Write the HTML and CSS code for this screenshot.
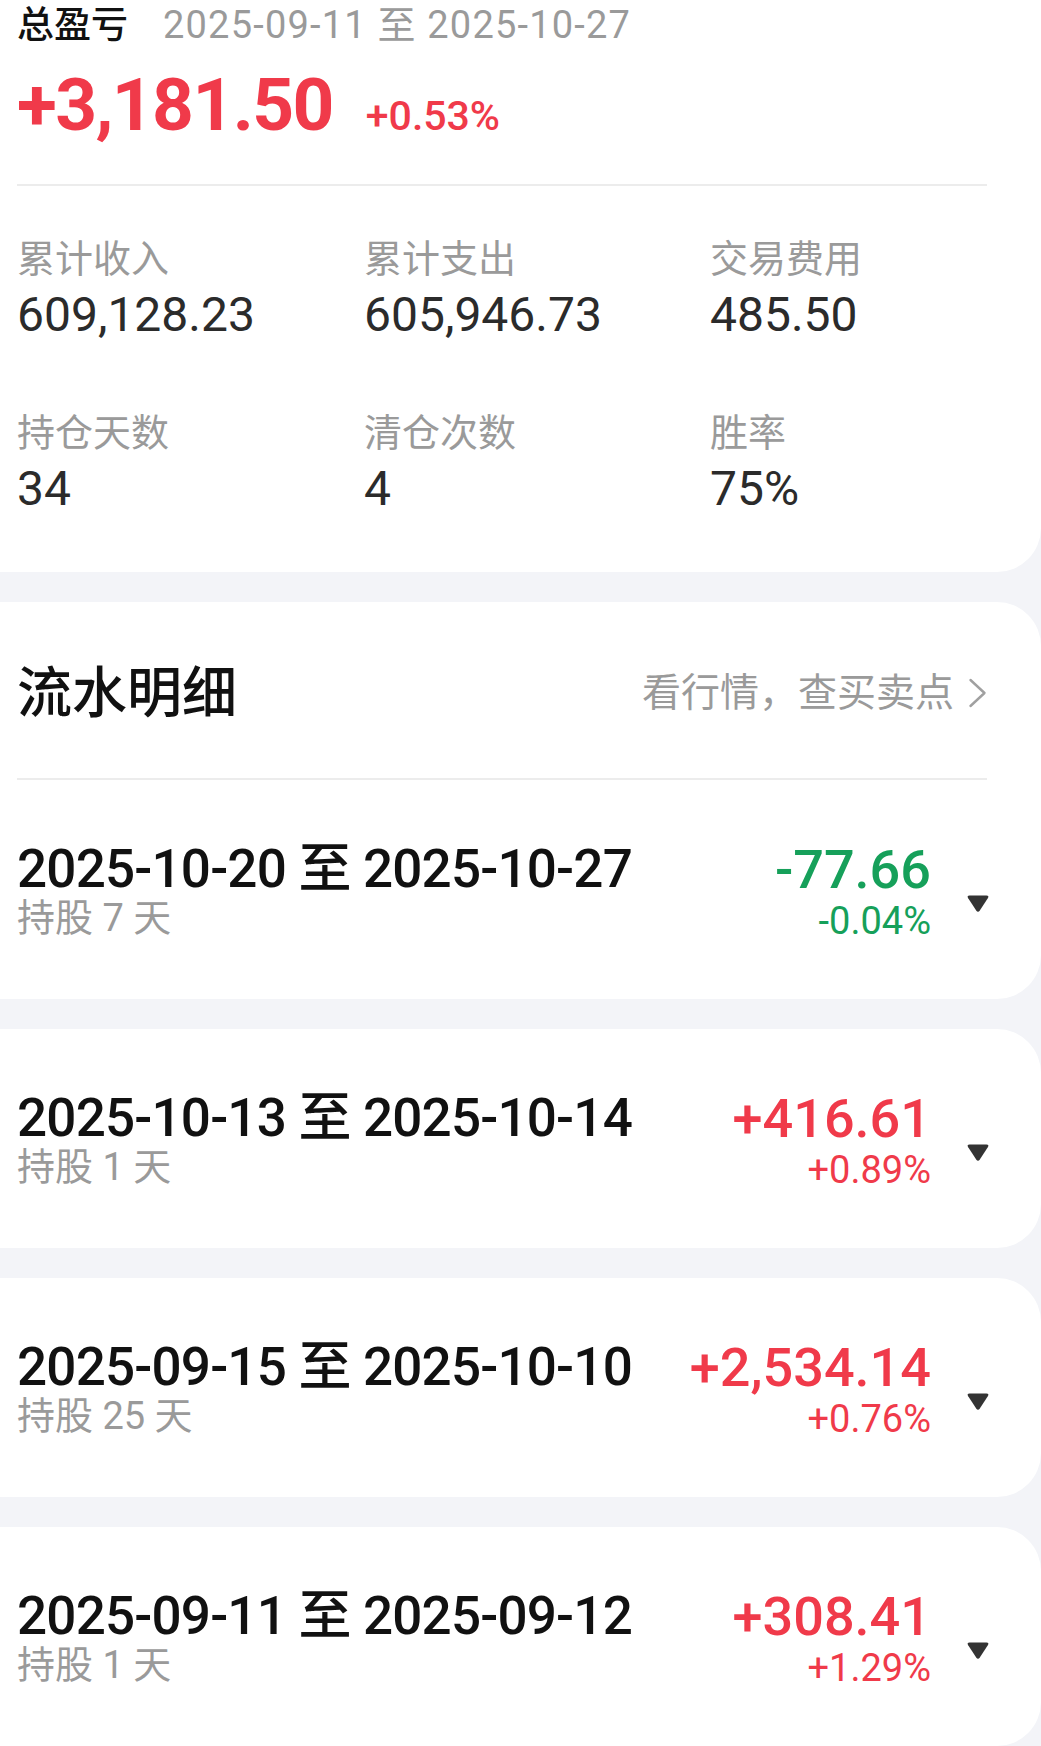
FILE: index.html
```html
<!DOCTYPE html>
<html lang="zh-CN">
<head>
<meta charset="utf-8">
<title>总盈亏</title>
<link rel="stylesheet" href="styles.css">
</head>
<body>
<section class="card summary">
  <div class="title-row">
    <span class="title">总盈亏</span>
    <span class="range">2025-09-11 至 2025-10-27</span>
  </div>
  <div class="total-row">
    <span class="total">+3,181.50</span>
    <span class="total-pct">+0.53%</span>
  </div>
  <div class="divider"></div>
  <div class="stats">
    <div class="stat"><div class="label">累计收入</div><div class="value">609,128.23</div></div>
    <div class="stat"><div class="label">累计支出</div><div class="value">605,946.73</div></div>
    <div class="stat"><div class="label">交易费用</div><div class="value">485.50</div></div>
    <div class="stat"><div class="label">持仓天数</div><div class="value">34</div></div>
    <div class="stat"><div class="label">清仓次数</div><div class="value">4</div></div>
    <div class="stat"><div class="label">胜率</div><div class="value">75%</div></div>
  </div>
</section>

<section class="card">
  <div class="list-head">
    <span class="list-title">流水明细</span>
    <span class="link">看行情，查买卖点
      <svg class="chev" width="19" height="30" viewBox="0 0 19 30"><path d="M2.5 2 L16.5 15 L2.5 28" fill="none" stroke="#a0a0a0" stroke-width="2.4" stroke-linecap="round" stroke-linejoin="round"/></svg>
    </span>
  </div>
  <div class="divider list-divider"></div>
  <div class="row">
    <div class="left">
      <div class="date">2025-10-20 至 2025-10-27</div>
      <div class="hold">持股 7 天</div>
    </div>
    <div class="amt down">
      <div class="num">-77.66</div>
      <div class="pct">-0.04%</div>
    </div>
    <svg class="caret" width="24" height="19" viewBox="0 0 24 19"><path d="M3.5 1.5 H20.5 Q23.5 1.5 21.8 4.2 L13.8 16.6 Q12 19 10.2 16.6 L2.2 4.2 Q0.5 1.5 3.5 1.5 Z" fill="#333"/></svg>
  </div>
</section>

<section class="card">
  <div class="row">
    <div class="left">
      <div class="date">2025-10-13 至 2025-10-14</div>
      <div class="hold">持股 1 天</div>
    </div>
    <div class="amt up">
      <div class="num">+416.61</div>
      <div class="pct">+0.89%</div>
    </div>
    <svg class="caret" width="24" height="19" viewBox="0 0 24 19"><path d="M3.5 1.5 H20.5 Q23.5 1.5 21.8 4.2 L13.8 16.6 Q12 19 10.2 16.6 L2.2 4.2 Q0.5 1.5 3.5 1.5 Z" fill="#333"/></svg>
  </div>
</section>

<section class="card">
  <div class="row">
    <div class="left">
      <div class="date">2025-09-15 至 2025-10-10</div>
      <div class="hold">持股 25 天</div>
    </div>
    <div class="amt up">
      <div class="num">+2,534.14</div>
      <div class="pct">+0.76%</div>
    </div>
    <svg class="caret" width="24" height="19" viewBox="0 0 24 19"><path d="M3.5 1.5 H20.5 Q23.5 1.5 21.8 4.2 L13.8 16.6 Q12 19 10.2 16.6 L2.2 4.2 Q0.5 1.5 3.5 1.5 Z" fill="#333"/></svg>
  </div>
</section>

<section class="card">
  <div class="row">
    <div class="left">
      <div class="date">2025-09-11 至 2025-09-12</div>
      <div class="hold">持股 1 天</div>
    </div>
    <div class="amt up">
      <div class="num">+308.41</div>
      <div class="pct">+1.29%</div>
    </div>
    <svg class="caret" width="24" height="19" viewBox="0 0 24 19"><path d="M3.5 1.5 H20.5 Q23.5 1.5 21.8 4.2 L13.8 16.6 Q12 19 10.2 16.6 L2.2 4.2 Q0.5 1.5 3.5 1.5 Z" fill="#333"/></svg>
  </div>
</section>
</body>
</html>
```
FILE: styles.css
```css
* { box-sizing: border-box; }
html, body {
  margin: 0;
  padding: 0;
}
body {
  background: #f3f4f8;
  font-family: Roboto, "Noto Sans CJK SC", sans-serif;
  color: #1a1a1a;
  width: 1041px;
  overflow: hidden;
}
.card {
  background: #ffffff;
  border-radius: 0 44px 44px 0;
  margin-bottom: 30px;
}
.summary {
  border-radius: 0 0 44px 0;
  padding: 2px 54px 55px 17px;
}
.title-row {
  display: flex;
  align-items: baseline;
  height: 46px;
  line-height: 46px;
}
.title {
  font-size: 37px;
  font-weight: 500;
  color: #111;
}
.range {
  margin-left: 35px;
  font-size: 38px;
  letter-spacing: 1.2px;
  color: #9a9a9a;
}
.total-row {
  display: flex;
  align-items: baseline;
  height: 80px;
  margin-top: 17px;
}
.total {
  font-size: 73px;
  line-height: 80px;
  font-weight: 700;
  letter-spacing: -1.6px;
  color: #f03a4a;
}
.total-pct {
  margin-left: 33px;
  font-size: 41px;
  line-height: 44px;
  font-weight: 500;
  color: #f03a4a;
}
.divider {
  height: 2px;
  background: #ececec;
  margin-top: 39px;
}
.stats {
  display: grid;
  grid-template-columns: 347px 346px auto;
  row-gap: 68px;
  margin-top: 51px;
}
.label {
  font-size: 38px;
  line-height: 44px;
  color: #9a9a9a;
  margin-bottom: 6px;
}
.value {
  font-size: 48px;
  line-height: 56px;
  color: #2b2b2b;
}
.list-head {
  display: flex;
  align-items: center;
  justify-content: space-between;
  padding: 59px 54px 0 17px;
}
.list-title {
  font-size: 55px;
  line-height: 64px;
  font-weight: 500;
  color: #111;
}
.link {
  display: flex;
  align-items: center;
  font-size: 39px;
  line-height: 44px;
  color: #9a9a9a;
}
.chev {
  margin-left: 14px;
}
.list-divider {
  margin: 53px 54px 0 17px;
}
.row {
  display: flex;
  align-items: flex-start;
  height: 219px;
  padding: 0 51px 0 17px;
}
.left {
  flex: 1;
  padding-top: 64px;
}
.date {
  font-size: 53px;
  line-height: 50px;
  font-weight: 500;
  letter-spacing: -0.8px;
  color: #111;
}
.hold {
  margin-top: 4px;
  font-size: 38px;
  line-height: 40px;
  color: #9a9a9a;
}
.amt {
  text-align: right;
  padding-top: 62px;
}
.num {
  font-size: 54px;
  line-height: 56px;
  font-weight: 500;
}
.pct {
  margin-top: 1px;
  font-size: 38px;
  line-height: 44px;
}
.up { color: #f03a4a; }
.down { color: #16a05a; }
.caret {
  margin: 114px 0 0 35px;
  flex: none;
}
```
